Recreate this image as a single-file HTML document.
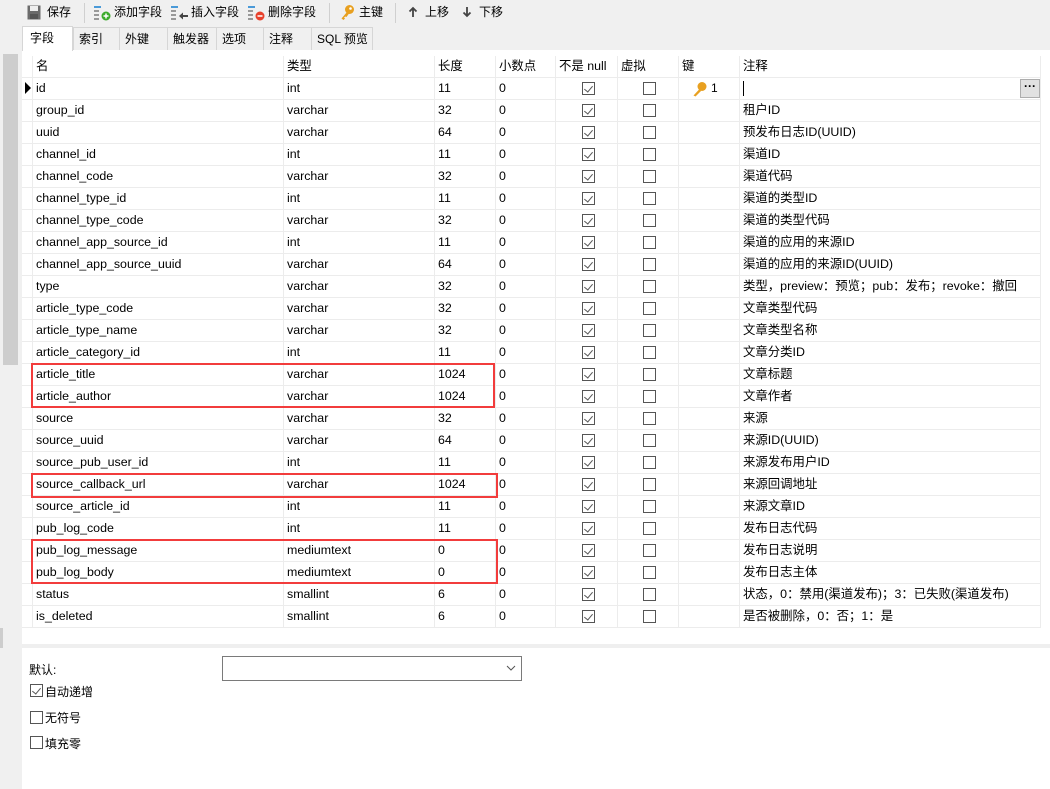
<!DOCTYPE html>
<html><head><meta charset="utf-8"><style>
*{box-sizing:border-box;margin:0;padding:0}
body{width:1050px;height:789px;background:#f0f0f0;font-family:"Liberation Sans","Noto Sans CJK SC",sans-serif;font-size:12px;color:#000;position:relative;overflow:hidden}
.abs{position:absolute}
.tb{position:absolute;top:4px;height:17px;line-height:17px;font-size:12px}
.sep{position:absolute;top:3px;width:1px;height:20px;background:#d0d0d0}
.tab{position:absolute;top:27px;height:23px;line-height:22px;padding-left:5px;background:#f0f0f0;border:1px solid #d6d6d6;border-bottom:none;font-size:12px}
#grid{position:absolute;left:22px;top:50px;width:1028px;height:739px;background:#fff}
.row{position:absolute;left:0;height:22px;width:1019px;border-bottom:1px solid #ececec;font-size:12.4px}
.c{position:absolute;top:0;height:22px;line-height:21px;border-right:1px solid #ececec;padding-left:3px;white-space:nowrap;overflow:hidden}
.cb{position:absolute;width:13px;height:13px;border:1px solid #555;background:#fff;top:4px}
.cb.k::after{content:"";position:absolute;left:3px;top:1px;width:4px;height:7px;border-right:1.3px solid #555;border-bottom:1.3px solid #555;transform:rotate(40deg)}
.red{position:absolute;border:2px solid #f23c3c}
</style></head><body>
<svg class="abs" style="left:27px;top:5px" width="14" height="15" viewBox="0 0 14 15"><rect x="0.5" y="0.5" width="13" height="14" fill="#6b6b6b"/><rect x="3" y="1" width="8" height="5" fill="#eee"/><rect x="3" y="9" width="8" height="5" fill="#555"/></svg>
<div class="tb" style="left:47px">保存</div>
<div class="sep" style="left:84px"></div>
<svg class="abs" style="left:94px;top:5px" width="18" height="16"><rect x="0" y="1" width="7" height="2" fill="#4a9ad8"/><rect x="0" y="5" width="5" height="2" fill="#999"/><rect x="0" y="9" width="5" height="2" fill="#999"/><rect x="0" y="13" width="5" height="2" fill="#999"/><circle cx="12" cy="11" r="4.5" fill="#3cab2c"/><path d="M12 8.5v5M9.5 11h5" stroke="#fff" stroke-width="1.5"/></svg>
<div class="tb" style="left:114px">添加字段</div>
<svg class="abs" style="left:171px;top:5px" width="18" height="16"><rect x="0" y="1" width="7" height="2" fill="#4a9ad8"/><rect x="0" y="5" width="5" height="2" fill="#999"/><rect x="0" y="9" width="5" height="2" fill="#999"/><rect x="0" y="13" width="5" height="2" fill="#999"/><path d="M8 11l4-3.5v2.5h5v2h-5v2.5z" fill="#444"/></svg>
<div class="tb" style="left:191px">插入字段</div>
<svg class="abs" style="left:248px;top:5px" width="18" height="16"><rect x="0" y="1" width="7" height="2" fill="#4a9ad8"/><rect x="0" y="5" width="5" height="2" fill="#999"/><rect x="0" y="9" width="5" height="2" fill="#999"/><rect x="0" y="13" width="5" height="2" fill="#999"/><circle cx="12" cy="11" r="4.5" fill="#e8412c"/><path d="M9.5 11h5" stroke="#fff" stroke-width="1.5"/></svg>
<div class="tb" style="left:268px">删除字段</div>
<div class="sep" style="left:329px"></div>
<svg class="abs" style="left:340px;top:4px" width="15" height="17"><circle cx="9.5" cy="5.5" r="4.5" fill="#e8a020"/><circle cx="10.5" cy="4.5" r="1.3" fill="#fff"/><path d="M7 8L1.5 14.5l2 1.5 1.5-1.5-1-1 1.5-1 1 .5 2.5-3.5z" fill="#e8a020"/></svg>
<div class="tb" style="left:359px">主键</div>
<div class="sep" style="left:395px"></div>
<svg class="abs" style="left:408px;top:6px" width="10" height="12"><path d="M5 11V2M1.5 5.5L5 2l3.5 3.5" stroke="#444" stroke-width="1.8" fill="none"/></svg>
<div class="tb" style="left:425px">上移</div>
<svg class="abs" style="left:462px;top:6px" width="10" height="12"><path d="M5 1v9M1.5 6.5L5 10l3.5-3.5" stroke="#444" stroke-width="1.8" fill="none"/></svg>
<div class="tb" style="left:479px">下移</div>
<div class="tab" style="left:73px;width:47px">索引</div>
<div class="tab" style="left:119px;width:49px">外键</div>
<div class="tab" style="left:167px;width:50px">触发器</div>
<div class="tab" style="left:216px;width:48px">选项</div>
<div class="tab" style="left:263px;width:49px">注释</div>
<div class="tab" style="left:311px;width:62px">SQL 预览</div>
<div class="tab" style="left:22px;width:51px;top:26px;height:25px;background:#fff;z-index:2;padding-left:7px">字段</div>
<div class="abs" style="left:3px;top:54px;width:15px;height:311px;background:#cdcdcd"></div>
<div class="abs" style="left:0;top:628px;width:3px;height:20px;background:#cdcdcd"></div>
<div id="grid">
<div style="position:absolute;left:0;top:594px;width:1028px;height:4px;background:#efefef"></div>
</div>
<div id="rows" class="abs" style="left:22px;top:56px"></div>
<div class="abs" style="left:1020px;top:79px;width:20px;height:19px;background:#e1e1e1;border:1px solid #adadad;text-align:center;line-height:12px;font-weight:bold;font-size:12px">···</div>
<div class="abs" style="left:743px;top:81px;width:1px;height:15px;background:#000"></div>
<div class="abs" style="left:25px;top:82px;width:0;height:0;border-top:6px solid transparent;border-bottom:6px solid transparent;border-left:6px solid #000"></div>
<svg class="abs" style="left:692px;top:81px" width="15" height="16"><circle cx="10" cy="5.5" r="4.5" fill="#e8a020"/><path d="M7.5 8L1.5 14.5l2 1 5.5-5.5z" fill="#e8a020"/></svg>
<div class="abs" style="left:711px;top:81px;line-height:15px">1</div>
<div class="red" style="left:31px;top:363px;width:464px;height:45px"></div>
<div class="red" style="left:31px;top:473px;width:467px;height:25px"></div>
<div class="red" style="left:31px;top:539px;width:467px;height:45px"></div>
<div class="abs" style="left:29px;top:661px">默认:</div>
<div class="abs" style="left:222px;top:656px;width:300px;height:25px;border:1px solid #7a7a7a;background:#fff"><svg style="position:absolute;right:5px;top:8px" width="10" height="7"><path d="M1 1l4 4 4-4" stroke="#555" fill="none"/></svg></div>
<div class="cb k" style="left:30px;top:684px;position:absolute"></div><div class="abs" style="left:45px;top:683px">自动递增</div>
<div class="cb" style="left:30px;top:711px;position:absolute"></div><div class="abs" style="left:45px;top:709px">无符号</div>
<div class="cb" style="left:30px;top:736px;position:absolute"></div><div class="abs" style="left:45px;top:735px">填充零</div>
<script>
var d=[["id","int","11",""],["group_id","varchar","32","租户ID"],["uuid","varchar","64","预发布日志ID(UUID)"],["channel_id","int","11","渠道ID"],["channel_code","varchar","32","渠道代码"],["channel_type_id","int","11","渠道的类型ID"],["channel_type_code","varchar","32","渠道的类型代码"],["channel_app_source_id","int","11","渠道的应用的来源ID"],["channel_app_source_uuid","varchar","64","渠道的应用的来源ID(UUID)"],["type","varchar","32","类型，preview：预览；pub：发布；revoke：撤回"],["article_type_code","varchar","32","文章类型代码"],["article_type_name","varchar","32","文章类型名称"],["article_category_id","int","11","文章分类ID"],["article_title","varchar","1024","文章标题"],["article_author","varchar","1024","文章作者"],["source","varchar","32","来源"],["source_uuid","varchar","64","来源ID(UUID)"],["source_pub_user_id","int","11","来源发布用户ID"],["source_callback_url","varchar","1024","来源回调地址"],["source_article_id","int","11","来源文章ID"],["pub_log_code","int","11","发布日志代码"],["pub_log_message","mediumtext","0","发布日志说明"],["pub_log_body","mediumtext","0","发布日志主体"],["status","smallint","6","状态，0：禁用(渠道发布)；3：已失败(渠道发布)"],["is_deleted","smallint","6","是否被删除，0：否；1：是"]];
var cols=[[0,11],[11,251],[262,151],[413,61],[474,60],[534,62],[596,61],[657,61],[718,301]];
var h='<div class="row" style="top:0">';
var hd=["","名","类型","长度","小数点","不是 null","虚拟","键","注释"];
cols.forEach(function(c,i){h+='<div class="c" style="left:'+c[0]+'px;width:'+c[1]+'px">'+hd[i]+'</div>'});
h+='</div>';
d.forEach(function(r,j){var t=22+j*22;h+='<div class="row" style="top:'+t+'px">';
var v=["",r[0],r[1],r[2],"0","","","",r[3]];
cols.forEach(function(c,i){h+='<div class="c" style="left:'+c[0]+'px;width:'+c[1]+'px">'+v[i]+'</div>'});
h+='<div class="cb k" style="left:560px"></div><div class="cb" style="left:621px"></div></div>';});
document.getElementById('rows').innerHTML=h;
</script>
</body></html>
